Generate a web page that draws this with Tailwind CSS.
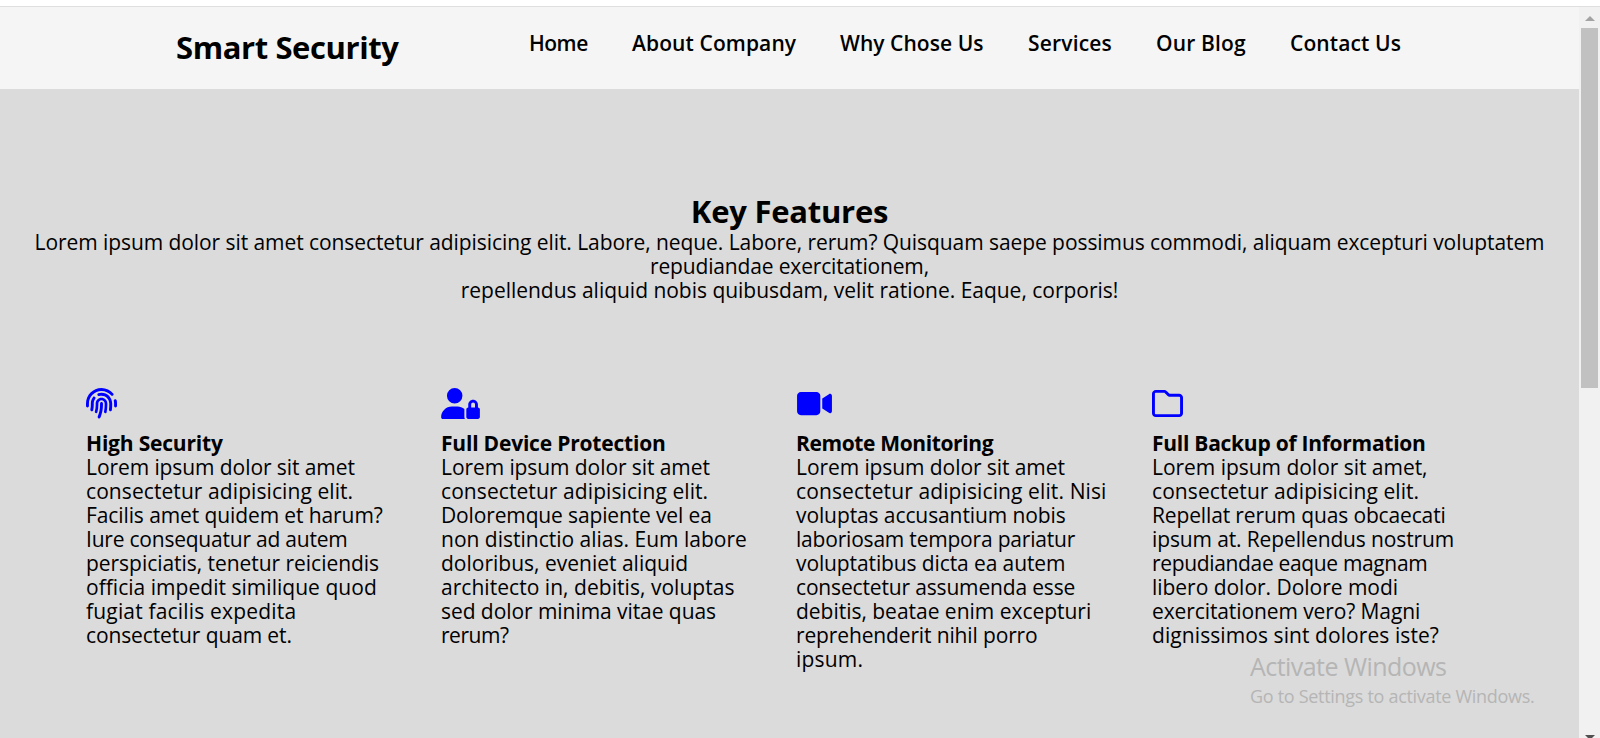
<!DOCTYPE html>
<html lang="en">
<head>
<meta charset="utf-8">
<title>Smart Security</title>
<script src="https://cdn.jsdelivr.net/npm/@tailwindcss/browser@4"></script>
</head>
<body class="h-[738px] overflow-hidden bg-white font-['Open_Sans','Noto_Sans',sans-serif] text-black">
<div class="flex h-full flex-col pt-1.5">
  <div class="flex min-h-0 flex-1 border-t border-[#dfdfdf]">
    <div class="flex w-[1579px] flex-col bg-[#dbdbdb]">
      <header class="flex h-[82px] shrink-0 items-start bg-[#f5f5f5] pl-[176px] whitespace-nowrap">
        <h1 class="w-[353px] pt-[22px] text-[31px] leading-[37px] font-bold tracking-[-0.4px]">Smart Security</h1>
        <nav class="flex pt-6 text-[21px] leading-6 font-semibold">
          <a class="w-[103px] tracking-[-0.5px]">Home</a>
          <a class="w-[208px] tracking-[0.1px]">About Company</a>
          <a class="w-[188px] tracking-[0.05px]">Why Chose Us</a>
          <a class="w-[128px] tracking-[0.18px]">Services</a>
          <a class="w-[134px] tracking-[0.16px]">Our Blog</a>
          <a class="tracking-[0.1px]">Contact Us</a>
        </nav>
      </header>
      <main class="pt-[104px] text-[21px] leading-6">
        <section class="text-center whitespace-nowrap">
          <h2 class="text-[31px] leading-[37px] font-bold tracking-[-0.25px]">Key Features</h2>
          <p class="tracking-[-0.07px]">Lorem ipsum dolor sit amet consectetur adipisicing elit. Labore, neque. Labore, rerum? Quisquam saepe possimus commodi, aliquam excepturi voluptatem<br><span class="tracking-[-0.16px]">repudiandae exercitationem,</span><br><span class="tracking-[-0.02px]">repellendus aliquid nobis quibusdam, velit ratione. Eaque, corporis!</span></p>
        </section>
        <section class="grid grid-cols-[355px_355px_355px_355px] pt-[86px] pl-[86px] whitespace-nowrap">
          <article>
            <svg class="mb-3 h-[31px] w-[31px] fill-[#00f]" viewBox="0 0 512 512"><path d="M48 256C48 141.1 141.1 48 256 48c63.1 0 119.6 28.1 157.8 72.5c8.6 10.1 23.8 11.2 33.8 2.6s11.2-23.8 2.6-33.8C403.3 34.6 333.7 0 256 0C114.6 0 0 114.6 0 256v40c0 13.3 10.7 24 24 24s24-10.7 24-24V256zm458.5-52.9c-2.7-13-15.5-21.3-28.4-18.5s-21.3 15.5-18.5 28.4c2.9 13.9 4.5 28.3 4.5 43.1v40c0 13.3 10.7 24 24 24s24-10.7 24-24V256c0-18.1-1.9-35.8-5.5-52.9zM256 80c-19 0-37.4 3-54.5 8.6c-15.2 5-18.7 23.7-8.3 35.9c7.1 8.3 18.8 10.8 29.4 7.9c10.6-2.9 21.8-4.4 33.4-4.4c70.7 0 128 57.3 128 128v24.9c0 25.2-1.5 50.3-4.4 75.3c-1.7 14.6 9.4 27.8 24.2 27.8c11.8 0 21.9-8.6 23.3-20.3c3.3-27.4 5-55 5-82.7V256c0-97.2-78.8-176-176-176zM150.7 148.7c-9.1-10.6-25.3-11.4-33.9-.4C93.7 178 80 215.4 80 256v24.9c0 24.2-2.6 48.4-7.8 71.9C68.8 368.4 80.1 384 96.1 384c10.5 0 19.9-7 22.2-17.3c6.4-28.1 9.7-56.8 9.7-85.8V256c0-27.2 8.5-52.4 22.9-73.1c7.2-10.4 8-24.6-.2-34.2zM256 160c-53 0-96 43-96 96v24.9c0 35.9-4.6 71.5-13.8 106.1c-3.8 14.3 6.7 29 21.5 29c9.5 0 17.9-6.2 20.4-15.4c10.5-39 15.9-79.2 15.9-119.7V256c0-28.7 23.3-52 52-52s52 23.3 52 52v24.9c0 36.3-3.5 72.4-10.4 107.9c-2.7 13.9 7.7 27.2 21.8 27.2c10.2 0 19-7 21-17c7.7-38.8 11.6-78.3 11.6-118.1V256c0-53-43-96-96-96zm24 96c0-13.3-10.7-24-24-24s-24 10.7-24 24v24.9c0 59.9-11 119.3-32.5 175.2l-5.9 15.3c-4.8 12.4 1.4 26.3 13.8 31s26.3-1.4 31-13.8l5.9-15.3C267.9 411.9 280 346.7 280 280.9V256z"/></svg>
            <h3 class="font-bold tracking-[-0.19px]">High Security</h3>
            <p class="tracking-[-0.08px]">Lorem ipsum dolor sit amet<br><span class="tracking-[0.08px]">consectetur adipisicing elit.</span><br><span class="tracking-[-0.1px]">Facilis amet quidem et harum?</span><br><span class="tracking-[-0.22px]">Iure consequatur ad autem</span><br><span class="tracking-[-0.04px]">perspiciatis, tenetur reiciendis</span><br><span class="tracking-[0.03px]">officia impedit similique quod</span><br><span class="tracking-[0.18px]">fugiat facilis expedita</span><br><span class="tracking-[-0.12px]">consectetur quam et.</span></p>
          </article>
          <article>
            <svg class="mb-3 h-[31px] w-[39px] fill-[#00f]" viewBox="0 0 640 512"><path d="M224 256A128 128 0 1 0 224 0a128 128 0 1 0 0 256zm-45.7 48C79.8 304 0 383.8 0 482.3C0 498.7 13.3 512 29.7 512H392.6c-5.4-9.4-8.6-20.3-8.6-32V352c0-2.1 .1-4.2 .3-6.3c-31-26-71-41.7-114.6-41.7H178.3zM528 240c17.7 0 32 14.3 32 32v48H496V272c0-17.7 14.3-32 32-32zm-80 32v48c-17.7 0-32 14.3-32 32V480c0 17.7 14.3 32 32 32H608c17.7 0 32-14.3 32-32V352c0-17.7-14.3-32-32-32V272c0-44.2-35.8-80-80-80s-80 35.8-80 80z"/></svg>
            <h3 class="font-bold tracking-[-0.2px]">Full Device Protection</h3>
            <p class="tracking-[-0.08px]">Lorem ipsum dolor sit amet<br><span class="tracking-[0.08px]">consectetur adipisicing elit.</span><br><span class="tracking-[-0.14px]">Doloremque sapiente vel ea</span><br><span class="tracking-[0px]">non distinctio alias. Eum labore</span><br><span class="tracking-[0px]">doloribus, eveniet aliquid</span><br><span class="tracking-[0.04px]">architecto in, debitis, voluptas</span><br><span class="tracking-[-0.06px]">sed dolor minima vitae quas</span><br><span class="tracking-[-0.46px]">rerum?</span></p>
          </article>
          <article>
            <svg class="mb-3 ml-px h-[31px] w-[35px] fill-[#00f]" viewBox="0 0 576 512"><path d="M0 128C0 92.7 28.7 64 64 64H320c35.3 0 64 28.7 64 64V384c0 35.3-28.7 64-64 64H64c-35.3 0-64-28.7-64-64V128zM559.1 99.8c10.4 5.6 16.9 16.4 16.9 28.2V384c0 11.8-6.5 22.6-16.9 28.2s-23 5-32.9-1.6l-96-64L416 337.1V320 192 174.9l14.2-9.5 96-64c9.8-6.5 22.4-7.2 32.9-1.6z"/></svg>
            <h3 class="font-bold tracking-[-0.38px]">Remote Monitoring</h3>
            <p class="tracking-[-0.08px]">Lorem ipsum dolor sit amet<br><span class="tracking-[0.11px]">consectetur adipisicing elit. Nisi</span><br><span class="tracking-[-0.1px]">voluptas accusantium nobis</span><br><span class="tracking-[-0.2px]">laboriosam tempora pariatur</span><br><span class="tracking-[-0.11px]">voluptatibus dicta ea autem</span><br><span class="tracking-[-0.16px]">consectetur assumenda esse</span><br><span class="tracking-[-0.02px]">debitis, beatae enim excepturi</span><br><span class="tracking-[-0.14px]">reprehenderit nihil porro</span><br><span class="tracking-[0.2px]">ipsum.</span></p>
          </article>
          <article class="pl-px">
            <svg class="mb-3 h-[31px] w-[31px] fill-[#00f]" viewBox="0 0 512 512"><path d="M0 96C0 60.7 28.7 32 64 32H196.1c19.1 0 37.4 7.6 50.9 21.1L289.9 96H448c35.3 0 64 28.7 64 64V416c0 35.3-28.7 64-64 64H64c-35.3 0-64-28.7-64-64V96zM64 80c-8.8 0-16 7.2-16 16V416c0 8.8 7.2 16 16 16H448c8.8 0 16-7.2 16-16V160c0-8.8-7.2-16-16-16H286.6c-10.6 0-20.8-4.2-28.3-11.7L213.1 87c-4.5-4.5-10.6-7-17-7H64z"/></svg>
            <h3 class="font-bold tracking-[-0.26px]">Full Backup of Information</h3>
            <p class="tracking-[-0.03px]">Lorem ipsum dolor sit amet,<br><span class="tracking-[0.08px]">consectetur adipisicing elit.</span><br><span class="tracking-[-0.14px]">Repellat rerum quas obcaecati</span><br><span class="tracking-[-0.13px]">ipsum at. Repellendus nostrum</span><br><span class="tracking-[-0.34px]">repudiandae eaque magnam</span><br>libero dolor. Dolore modi<br><span class="tracking-[-0.1px]">exercitationem vero? Magni</span><br><span class="tracking-[0.08px]">dignissimos sint dolores iste?</span></p>
          </article>
        </section>
      </main>
    </div>
    <div class="flex w-[21px] flex-col items-center justify-between overflow-hidden bg-[#f1f1f1]">
      <div class="flex flex-col items-center">
        <svg class="mt-[9px] mb-[7px] h-[5px] w-[10px] fill-[#a3a3a3]" viewBox="0 0 10 5"><path d="M5 0l5 5H0z"/></svg>
        <div class="h-[360px] w-[17px] bg-[#c1c1c1]"></div>
      </div>
      <svg class="-mb-0.5 h-[5px] w-[10px] shrink-0 fill-[#505050]" viewBox="0 0 10 5"><path d="M0 0h10L5 5z"/></svg>
    </div>
  </div>
</div>
<div class="absolute top-[649px] left-[1250px] whitespace-nowrap text-[#b5b5b5]">
  <div class="text-[25px] leading-[34px] tracking-[-0.55px]">Activate Windows</div>
  <div class="pt-px text-[18px] leading-[25px] tracking-[-0.3px]">Go to Settings to activate Windows.</div>
</div>
</body>
</html>
